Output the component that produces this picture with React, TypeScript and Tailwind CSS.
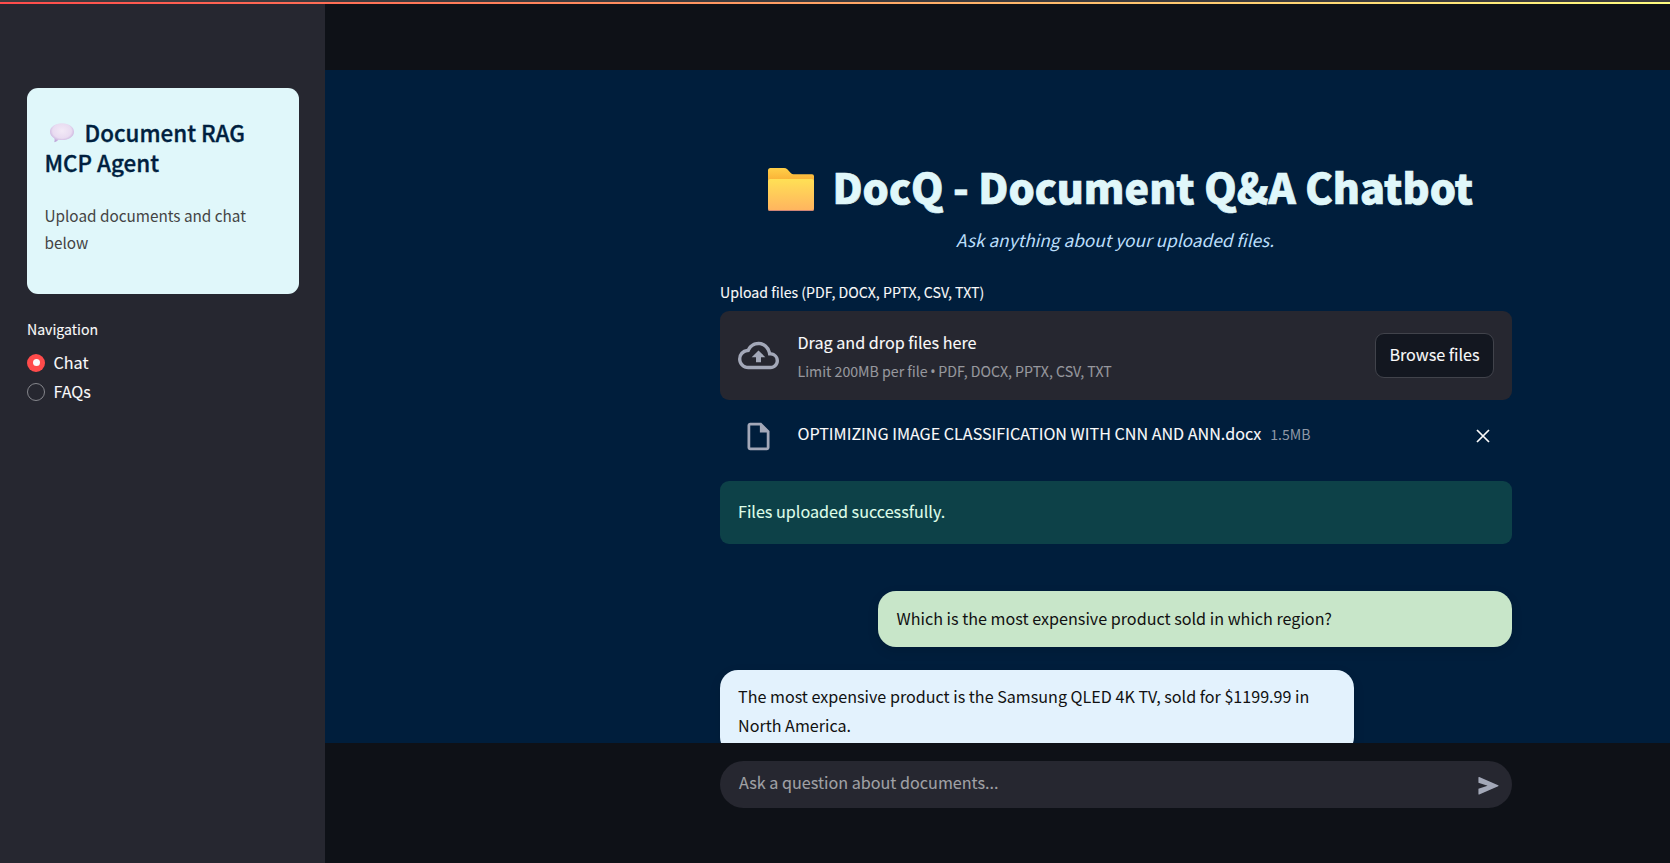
import React from "react";

const font = "font-['Noto_Sans_CJK_SC','Noto_Sans',sans-serif]";
const thick = "[-webkit-text-stroke:0.1px_currentColor]";

function SpeechBubble() {
  return (
    <svg className="mr-[11px] ml-[5px] inline-block h-[20px] w-[24px] align-[-1px]" viewBox="0 0 24 20">
      <defs>
        <radialGradient id="speech" cx="0.5" cy="0.4" r="0.6">
          <stop offset="0" stopColor="#f3eaf7" />
          <stop offset="0.65" stopColor="#e9dcf1" />
          <stop offset="1" stopColor="#bda2d6" />
        </radialGradient>
      </defs>
      <path d="M12 0.3C18.6 .3 24 3.9 24 8.800c0 5-5.400 8.300-12 8.300-1.200 0-2.300-.1-3.400-.3C7.500 18 6 19 4.300 19.200c.5-1.300.5-2.600.1-3.800C1.700 13.900 0 11.600 0 8.800 0 3.900 5.400.3 12 .3z" fill="url(#speech)" />
    </svg>
  );
}

function Folder() {
  return (
    <svg className="h-[43px] w-[46px] shrink-0" viewBox="0 0 46 43">
      <defs>
        <linearGradient id="back" x1="0" y1="0" x2="0" y2="1">
          <stop offset="0" stopColor="#ffcf48" />
          <stop offset="0.35" stopColor="#f9ab33" />
        </linearGradient>
        <linearGradient id="front" x1="0" y1="0" x2="0" y2="1">
          <stop offset="0" stopColor="#ffe055" />
          <stop offset="1" stopColor="#ffb55f" />
        </linearGradient>
      </defs>
      <path d="M0 2.500Q0 0 2.500 0H16q2 0 3.300 1.300L23 5.200q1 1 2.500 1H44q2 0 2 2V41q0 2-2 2H2q-2 0-2-2z" fill="url(#back)" />
      <path d="M0 13q0-2 2-2h42q2 0 2 2v28q0 2-2 2H2q-2 0-2-2z" fill="#cf8577" />
      <path d="M0 13q0-2 2-2h42q2 0 2 2v27q0 2-2 2H2q-2 0-2-2z" fill="url(#front)" />
    </svg>
  );
}

function Radio({ label, checked }: { label: string; checked?: boolean }) {
  return (
    <label className="flex h-[29px] items-center gap-[8.5px]">
      {checked ? (
        <span className="flex size-[18px] items-center justify-center rounded-full bg-[#ff4b4b]">
          <span className="size-[7px] rounded-full bg-[#fafafa]" />
        </span>
      ) : (
        <span className="size-[18px] rounded-full border border-[#85868c] bg-[#262730]" />
      )}
      <span className={`text-[16.15px] leading-[27px] text-[#fafafa] ${thick}`}>{label}</span>
    </label>
  );
}

function Sidebar() {
  return (
    <aside className="w-[325px] shrink-0 bg-[#262730] px-[27px] pt-[84px]">
      <section className="h-[206px] w-[272px] rounded-[11px] bg-[#e0f7fa] px-[17.5px] pt-[29px]">
        <h2 className="text-[22.4px] leading-[30px] font-medium whitespace-nowrap text-[#001f3f] [-webkit-text-stroke:0.35px_currentColor]">
          <SpeechBubble />Document RAG
          <br />
          MCP Agent
        </h2>
        <p className="mt-[25px] text-[15.3px] leading-[27px] text-[#444]">
          Upload documents and chat
          <br />
          below
        </p>
      </section>
      <p className={`mt-[22px] h-[32px] text-[14.1px] leading-[26px] text-[#fafafa] ${thick}`}>Navigation</p>
      <Radio label="Chat" checked />
      <Radio label="FAQs" />
    </aside>
  );
}

export default function App() {
  return (
    <div className={`flex h-[863px] w-full flex-col overflow-hidden bg-[#0e1117] ${font}`}>
      <div className="h-[2px] shrink-0 bg-[#3b3b3e]" />
      <div className="h-[2px] shrink-0 bg-[linear-gradient(90deg,#ff4b4b,#fffd80)]" />
      <div className="flex min-h-0 flex-1">
        <Sidebar />
        <div className="flex min-w-0 flex-1 flex-col">
          <header className="h-[66px] shrink-0 bg-[#0e1117]" />
          <main className="min-h-0 flex-1 overflow-hidden bg-[#001e3c] pl-[395px]">
            <div className="flex w-[792px] flex-col">
              <div className="mt-[90px] flex h-[58px] items-center gap-[18.500px] pl-[48px]">
                <Folder />
                <h1 className="pb-[5px] text-[41.3px] leading-[53px] font-black whitespace-nowrap text-[#e0f7fa] [-webkit-text-stroke:0.7px_currentColor]">DocQ - Document Q&amp;A Chatbot</h1>
              </div>
              <p className="mt-[6px] pr-[2px] text-center text-[17.25px] leading-[32px] text-[#bbdefb] italic">Ask anything about your uploaded files.</p>
              <p className={`mt-[23px] text-[14.15px] leading-[26px] text-[#fafafa] ${thick}`}>Upload files (PDF, DOCX, PPTX, CSV, TXT)</p>
              <section className="mt-[6px] flex h-[89px] items-center rounded-[9px] bg-[#262730] px-[18px]">
                <svg className="size-[41px]" viewBox="0 0 24 24" fill="#a3a8b8">
                  <path d="M19.350 10.040A7.490 7.490 0 0 0 12 4C9.110 4 6.600 5.640 5.350 8.040A5.994 5.994 0 0 0 0 14c0 3.310 2.690 6 6 6h13c2.760 0 5-2.240 5-5 0-2.640-2.050-4.780-4.650-4.960zM19 18H6c-2.210 0-4-1.790-4-4 0-2.050 1.530-3.760 3.560-3.970l1.070-.110.500-.950A5.469 5.469 0 0 1 12 6c2.620 0 4.880 1.860 5.390 4.430l.300 1.500 1.530.110A2.980 2.980 0 0 1 22 15c0 1.650-1.350 3-3 3zM8 13h2.550v3h2.900v-3H16l-4-4z" />
                </svg>
                <div className="ml-[18.500px] flex-1 pt-[2px]">
                  <p className={`text-[16.15px] leading-[29px] text-[#fafafa] ${thick}`}>Drag and drop files here</p>
                  <p className={`text-[14.15px] leading-[28px] text-[#97989e] ${thick}`}>
                    Limit 200MB per file <span className="-mx-[0.5px] font-['Noto_Sans']">•</span> PDF, DOCX, PPTX, CSV, TXT
                  </p>
                </div>
                <button className={`h-[45px] w-[119px] rounded-[9px] border border-[#41434b] bg-[#131720] pb-[3px] text-[16.15px] text-[#fafafa] ${thick}`}>Browse files</button>
              </section>
              <div className="mt-[18px] flex h-[36px] items-center pr-[22px] pl-[22px]">
                <svg className="mr-[0.500px] size-[33px] shrink-0" viewBox="0 0 24 24" fill="#a3a8b8">
                  <path d="M14 2H6c-1.100 0-1.990.900-1.990 2L4 20c0 1.100.890 2 1.990 2H18c1.100 0 2-.900 2-2V8l-6-6zM6 20V4h7v5h5v11H6z" />
                </svg>
                <p className="ml-[22px] flex flex-1 items-baseline pb-[6px]">
                  <span className={`text-[16.12px] text-[#fafafa] ${thick}`}>OPTIMIZING IMAGE CLASSIFICATION WITH CNN AND ANN.docx</span>
                  <span className="ml-[9px] text-[14.1px] text-[#8f98a6]">1.5MB</span>
                </p>
                <svg className="h-[14px] w-[14px]" viewBox="0 0 14 14" fill="none" stroke="#fafafa" strokeWidth="1.7">
                  <path d="M1 1l12 12M13 1L1 13" />
                </svg>
              </div>
              <div className={`mt-[27px] flex h-[63px] items-center rounded-[9px] bg-[#0d4148] px-[18px] pb-[2px] text-[16.15px] text-[#dffde9] ${thick}`}>Files uploaded successfully.</div>
              <div className="mt-[47px] h-[56px] w-[634px] self-end rounded-[18px] bg-[#c8e6c9] px-[18.500px] pt-[13px] text-[16.15px] leading-[29px] text-[#111] shadow-[0_4px_12px_rgba(0,0,0,0.1)]">Which is the most expensive product sold in which region?</div>
              <div className="mt-[23px] h-[85px] w-[634px] rounded-[18px] bg-[#e3f2fd] px-[18px] pt-[12px] text-[16.13px] leading-[29px] text-[#111] shadow-[0_4px_12px_rgba(0,0,0,0.1)]">
                The most expensive product is the Samsung QLED 4K TV, sold for $1199.99 in
                <br />
                North America.
              </div>
            </div>
          </main>
          <footer className="h-[120px] shrink-0 bg-[#0e1117] pt-[18px] pl-[395px]">
            <div className="flex h-[47px] w-[792px] items-center justify-between rounded-full bg-[#262730] pr-[10px] pl-[19px] text-[16.15px] text-[#a0a1a5]">
              <span className={`pb-[5px] ${thick}`}>Ask a question about documents...</span>
              <svg className="mt-[2px] size-[27.500px]" viewBox="0 0 24 24" fill="#a3a8b8">
                <path d="M3 4.800v4.600L11 12l-8 2.600v4.600q0 .7.700.400L20.200 12.500q.900-.500 0-1L3.700 4.400Q3 4.100 3 4.800z" />
              </svg>
            </div>
          </footer>
        </div>
      </div>
    </div>
  );
}
